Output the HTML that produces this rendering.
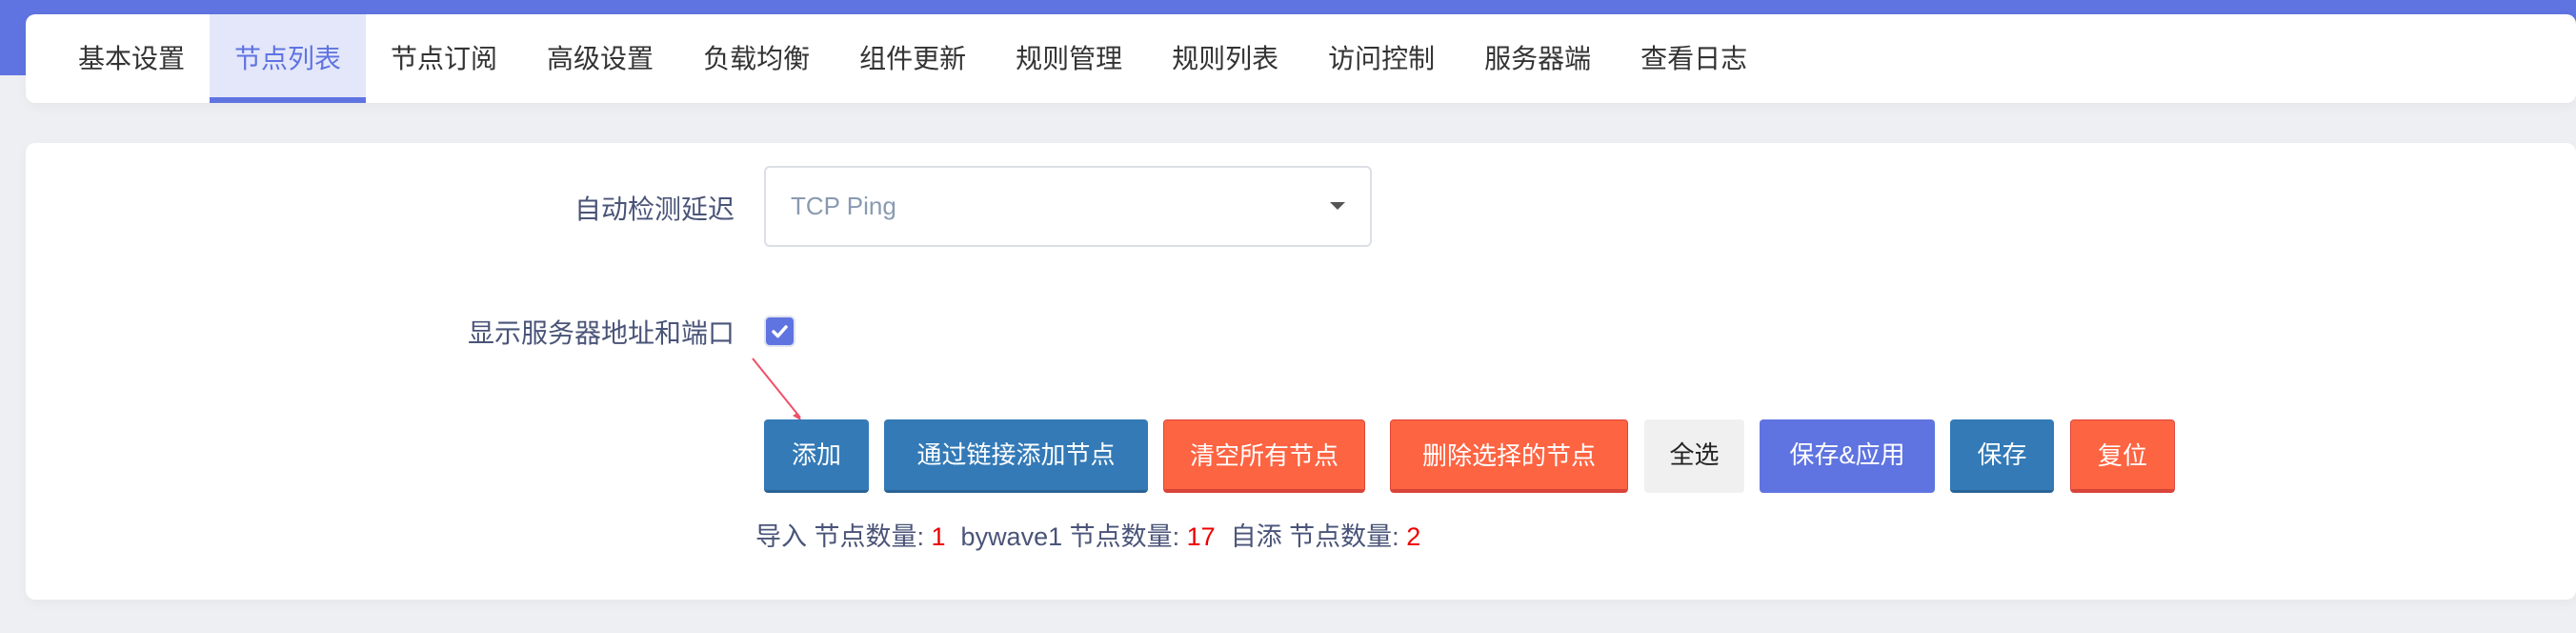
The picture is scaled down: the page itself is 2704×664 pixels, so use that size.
<!DOCTYPE html>
<html><head><meta charset="utf-8"><style>
*{box-sizing:border-box;margin:0;padding:0}
body{width:2704px;height:664px;background:#eeeff3;position:relative;overflow:hidden;font-family:"Liberation Sans","Noto Sans CJK SC",sans-serif}
.band{position:absolute;left:0;top:0;width:2704px;height:79px;background:#5f74e0}
.card{position:absolute;background:#fff;border-radius:10px;box-shadow:0 4px 12px rgba(0,0,0,.04)}
.tabs{position:absolute;left:56px;top:15px;height:93px;display:flex}
.tab{padding:0 26px;font-size:28px;line-height:93px;color:#333;height:93px}
.tab.act{background:#e4e7f9;color:#5f74e0;box-shadow:inset 0 -6px 0 #5f74e0}
.lbl{position:absolute;right:1933px;font-size:28px;color:#4a5478;white-space:nowrap}
.sel{position:absolute;left:802px;top:174px;width:638px;height:85px;border:2px solid #dcdfe6;border-radius:6px;font-size:26px;color:#8a9ab0;padding-left:26px;line-height:81px}
.arr{position:absolute;right:26px;top:36px;border-left:8px solid transparent;border-right:8px solid transparent;border-top:8px solid #555}
.cb{position:absolute;left:802px;top:331px;width:33px;height:33px;border-radius:6px;background:#5f74e0;border:2px solid #dfe3f0}
.btn{position:absolute;top:440px;height:77px;font-size:26px;color:#fff;text-align:center;line-height:75px;border-radius:4px}
.b{background:#337ab7;border-bottom:3px solid #2a6496}
.o{background:#fd6442;border:1px solid #e0443a;border-bottom:4px solid #d9443a}
.g{background:#f0f0f0;color:#222}
.p{background:#5f74e0}
.foot{position:absolute;left:793px;top:541px;font-size:27px;color:#4a5478;white-space:nowrap}
.foot b{color:#e00;font-weight:normal;margin-right:16px}
</style></head><body>
<div class="band"></div>
<div class="card" style="left:27px;top:15px;width:2677px;height:93px"></div>
<div class="tabs">
<div class="tab">基本设置</div><div class="tab act">节点列表</div><div class="tab">节点订阅</div><div class="tab">高级设置</div><div class="tab">负载均衡</div><div class="tab">组件更新</div><div class="tab">规则管理</div><div class="tab">规则列表</div><div class="tab">访问控制</div><div class="tab">服务器端</div><div class="tab">查看日志</div>
</div>
<div class="card" style="left:27px;top:150px;width:2677px;height:479px"></div>
<div class="lbl" style="top:198px">自动检测延迟</div>
<div class="sel">TCP Ping<div class="arr"></div></div>
<div class="lbl" style="top:328px">显示服务器地址和端口</div>
<div class="cb"><svg width="29" height="29" viewBox="0 0 29 29"><path d="M8 15l4.5 4.5L21 10" stroke="#fff" stroke-width="3.5" fill="none" stroke-linecap="round" stroke-linejoin="round"/></svg></div>
<svg style="position:absolute;left:0;top:0" width="2704" height="664"><line x1="790" y1="376" x2="840" y2="438" stroke="#f0506a" stroke-width="2"/><path d="M842 442l-10-6 5-3z" fill="#f0506a"/></svg>
<div class="btn b" style="left:802px;width:110px">添加</div>
<div class="btn b" style="left:928px;width:277px">通过链接添加节点</div>
<div class="btn o" style="left:1221px;width:212px">清空所有节点</div>
<div class="btn o" style="left:1459px;width:250px">删除选择的节点</div>
<div class="btn g" style="left:1726px;width:105px">全选</div>
<div class="btn p" style="left:1847px;width:184px">保存&amp;应用</div>
<div class="btn b" style="left:2047px;width:109px">保存</div>
<div class="btn o" style="left:2173px;width:110px">复位</div>
<div class="foot">导入 节点数量: <b>1</b>bywave1 节点数量: <b>17</b>自添 节点数量: <b style="margin:0">2</b></div>
</body></html>
